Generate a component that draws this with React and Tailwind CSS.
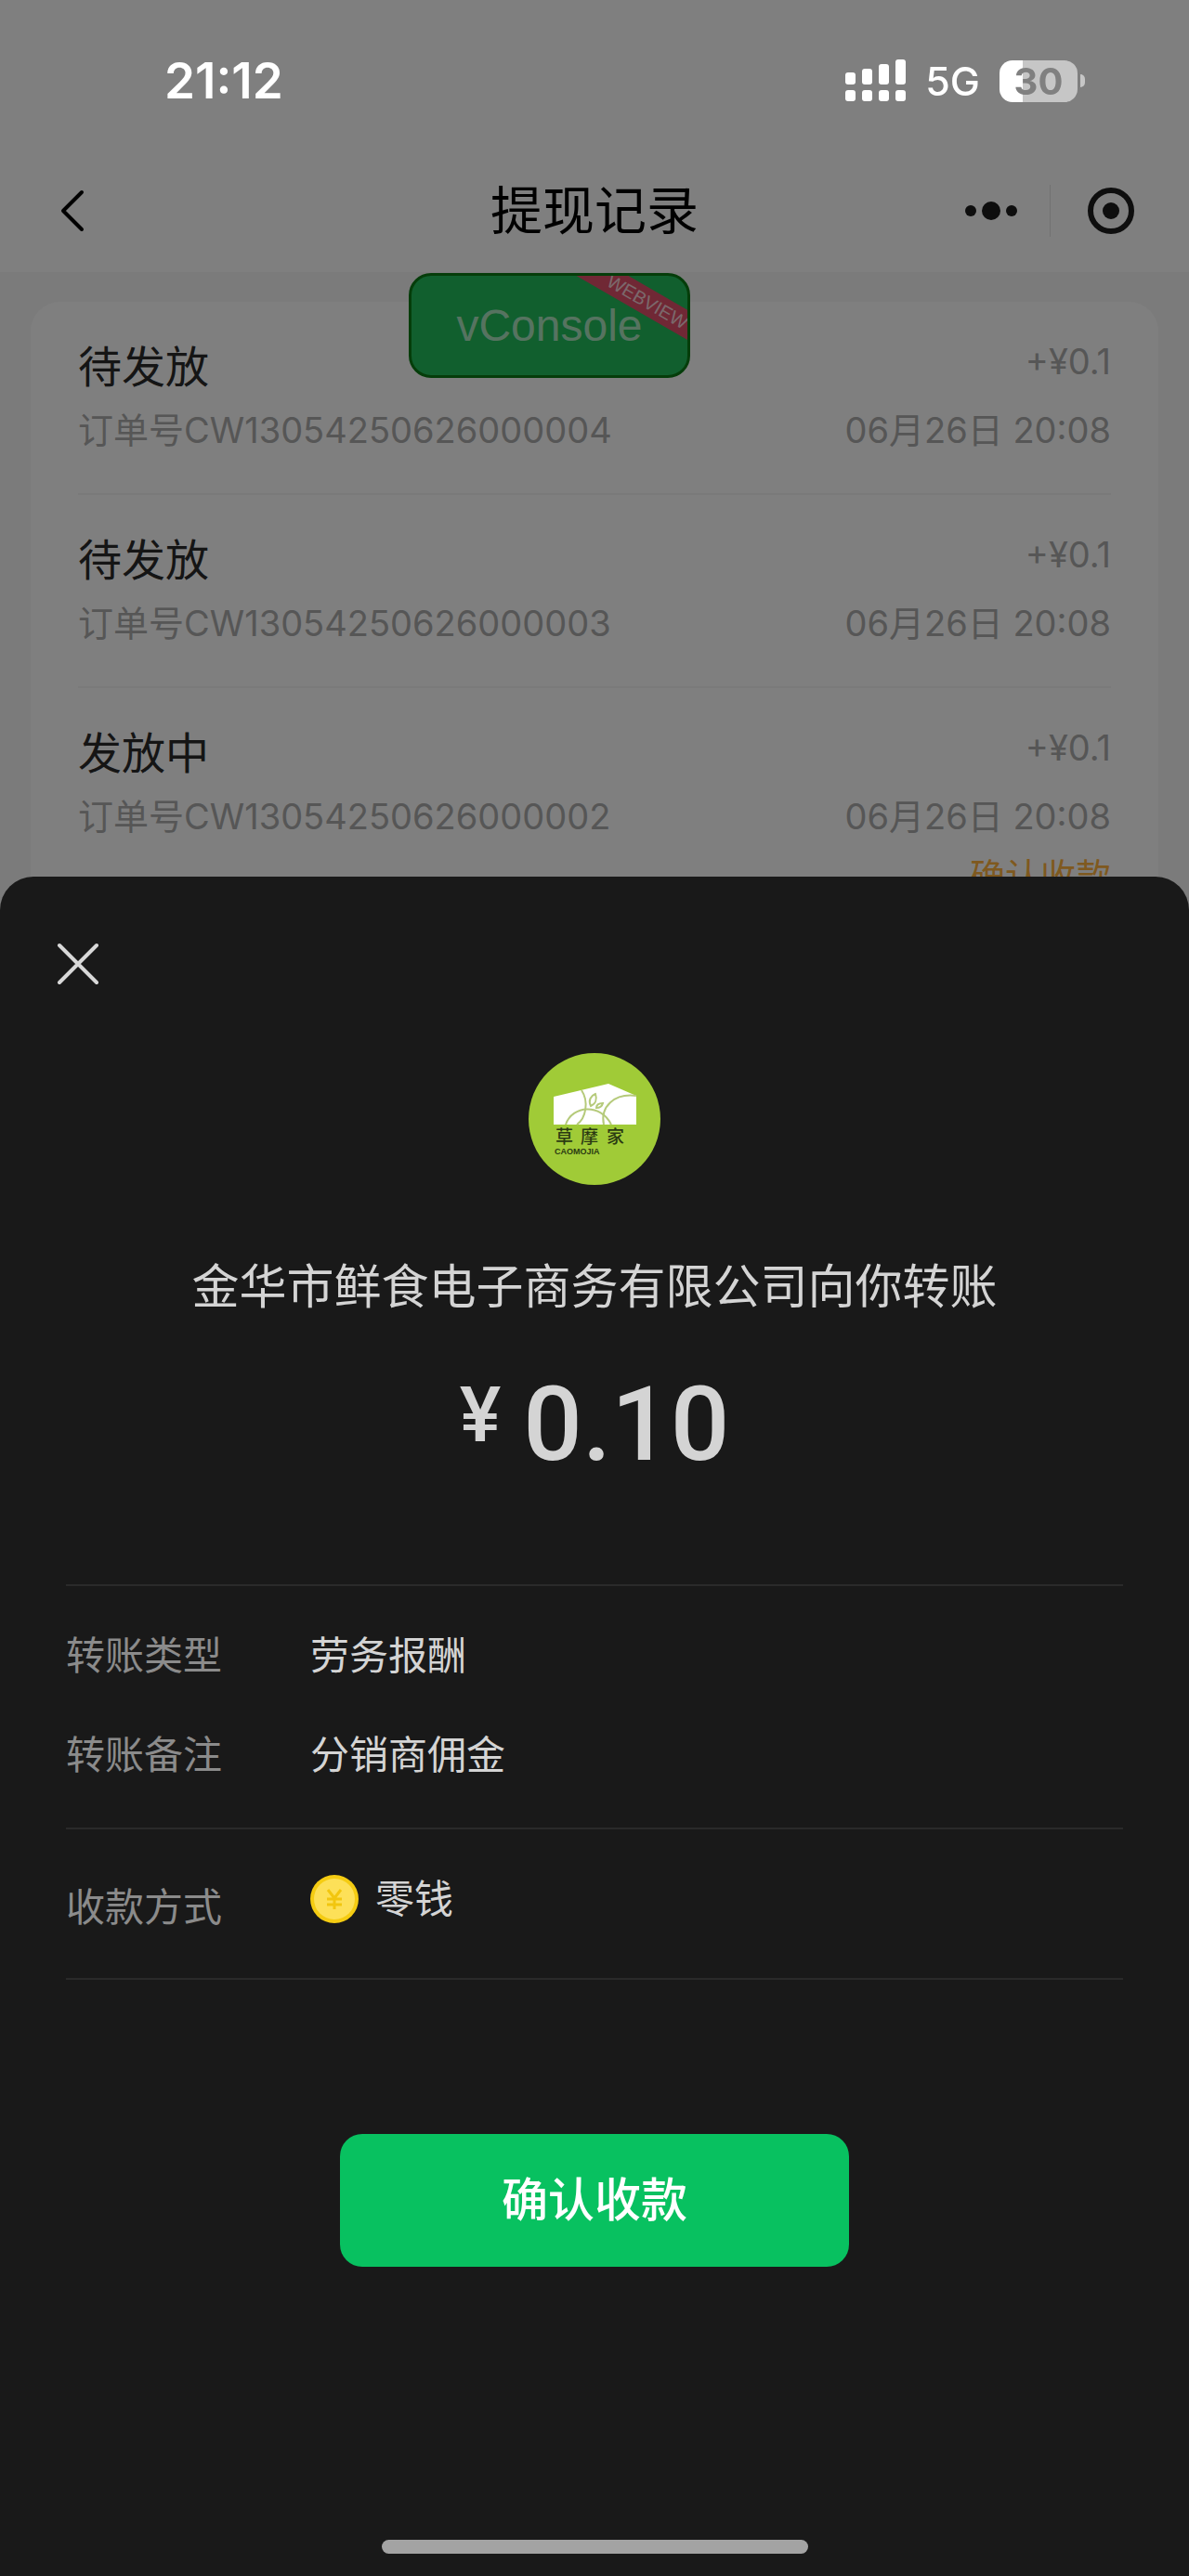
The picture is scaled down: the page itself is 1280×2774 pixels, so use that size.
import React, { useState } from "react";

const records = [
  { id: 1, status: "待发放", orderNo: "CW13054250626000004", amount: "+¥0.1", time: "06月26日 20:08" },
  { id: 2, status: "待发放", orderNo: "CW13054250626000003", amount: "+¥0.1", time: "06月26日 20:08" },
  { id: 3, status: "发放中", orderNo: "CW13054250626000002", amount: "+¥0.1", time: "06月26日 20:08", canConfirm: true },
];

const StatusBar = () => (
  <div className="relative z-20 flex h-[174px] items-center justify-between pl-[177px] pr-[112px] text-white">
    <span className="text-[53px] font-semibold leading-[60px]">21:12</span>

    <div className="flex items-center gap-[21px]">
      <svg width="65" height="46" viewBox="0 0 65 46" fill="currentColor" aria-hidden="true">
        <rect x="0" y="14" width="11" height="13" rx="3" />
        <rect x="18" y="10" width="11" height="17" rx="3" />
        <rect x="36" y="5" width="11" height="22" rx="3" />
        <rect x="54" y="0" width="11" height="27" rx="3" />
        <rect x="0" y="33" width="11" height="12" rx="3" />
        <rect x="18" y="33" width="11" height="12" rx="3" />
        <rect x="36" y="33" width="11" height="12" rx="3" />
        <rect x="54" y="33" width="11" height="12" rx="3" />
      </svg>
      <span className="text-[43px] font-medium leading-[60px]">5G</span>
      <div className="flex items-center gap-[3px]">
        <div className="flex h-[45px] w-[84px] items-center justify-center rounded-[14px] bg-linear-to-r from-white from-30% to-[#c6c6c6] to-30%">
          <span className="text-[40px] font-bold leading-[45px] text-[#808080]">30</span>
        </div>
        <div className="h-[14px] w-[5px] rounded-r-full bg-[#c6c6c6]" />
      </div>
    </div>
  </div>
);

const NavBar = () => (
  <div className="grid h-[106px] grid-cols-3 items-center px-[54px]">
    <button type="button" aria-label="返回" className="flex h-16 w-12 items-center justify-center">
      <svg width="26" height="46" viewBox="0 0 26 46" fill="none" stroke="black" strokeWidth="4" strokeLinecap="round" strokeLinejoin="round">
        <path d="M23 3L3 23L23 43" />
      </svg>
    </button>
    <h1 className="text-center text-[56px] leading-[80px] text-black">提现记录</h1>
    <div className="flex items-center justify-end">
      <button type="button" aria-label="更多" className="flex h-14 items-center pr-[35px]">
        <svg width="56" height="22" viewBox="0 0 56 22" fill="#1c1c1c">
          <circle cx="6" cy="11" r="6" />
          <circle cx="28" cy="11" r="10" />
          <circle cx="50" cy="11" r="6" />
        </svg>
      </button>
      <button type="button" aria-label="关闭小程序" className="flex h-14 items-center border-l border-[#e4e4e4] pl-[39px] pr-1">
        <svg width="52" height="52" viewBox="0 0 52 52">
          <circle cx="26" cy="26" r="22" fill="none" stroke="#1c1c1c" strokeWidth="6" />
          <circle cx="26" cy="26" r="9" fill="#1c1c1c" />
        </svg>
      </button>
    </div>
  </div>
);

const RecordItem = ({ record }) => (
  <li className="border-b-2 border-[#f5f5f5] pb-[38px] pt-9">
    <div className="flex justify-between">
      <span className="text-[47px] leading-[68px] text-[#2a2a2a]">{record.status}</span>
      <span className="text-[38px] leading-[56px] text-[#acacac]">{record.amount}</span>
    </div>
    <div className="mt-1 flex justify-between text-[38px] leading-[60px] text-[#acacac]">
      <span>订单号{record.orderNo}</span>
      <span>{record.time}</span>
    </div>
    {record.canConfirm && (
      <div className="mt-1 flex justify-end">
        <a href="#confirm" className="text-[38px] leading-[60px] text-[#ffb23e]">
          确认收款
        </a>
      </div>
    )}
  </li>
);

const CompanyLogo = () => (
  <svg className="mx-auto mt-16 block" width="142" height="142" viewBox="0 0 142 142" role="img" aria-label="草摩家">
    <circle cx="71" cy="71" r="71" fill="#a0cb37" />
    <path d="M27 47L86 33L116 46V77H27Z" fill="white" />
    <g fill="none" stroke="#b5ca7a" strokeWidth="2">
      <path d="M57 40C65 52 62 70 52 77" />
      <path d="M40 77C47 56 78 54 89 77" />
      <path d="M81 77C77 58 92 43 116 46" />
      <path d="M67 57C64 51 67 46 72 44C74 50 72 55 67 57Z" />
      <path d="M73 59C73 55 76 54 80 54C79 58 77 59 73 59Z" />
    </g>
    <g fill="#2b3a12" fontSize="19" fontWeight="500">
      <text x="29" y="97">草</text>
      <text x="56" y="97">摩</text>
      <text x="84" y="97">家</text>
    </g>
    <text x="28" y="109" fill="#2b3a12" fontSize="9" fontWeight="700" fontFamily="Liberation Sans, sans-serif">
      CAOMOJIA
    </text>
  </svg>
);

const CoinIcon = () => (
  <svg width="52" height="52" viewBox="0 0 52 52" aria-hidden="true">
    <circle cx="26" cy="26" r="26" fill="#f5cc12" />
    <circle cx="26" cy="26" r="22" fill="#fde058" />
    <path d="M19 16L26 25L33 16M26 25V37M18 26H34M18 32H34" fill="none" stroke="#f2c60f" strokeWidth="3" />
  </svg>
);

const TransferSheet = ({ onClose }) => (
  <section role="dialog" aria-label="转账" className="rounded-t-[36px] bg-[#191919] pb-6 pt-[62px] text-[#d4d4d4]">
    <button type="button" aria-label="关闭" onClick={onClose} className="ml-[52px] flex h-16 w-16 items-center justify-center">
      <svg width="46" height="46" viewBox="0 0 46 46" fill="none" stroke="#d8d8d8" strokeWidth="4" strokeLinecap="round">
        <path d="M3 3L43 43M43 3L3 43" />
      </svg>
    </button>

    <CompanyLogo />
    <h2 className="mt-[72px] text-center text-[51px] leading-[76px]">金华市鲜食电子商务有限公司向你转账</h2>
    <p className="mt-[50px] flex items-start justify-center gap-6 font-[Roboto,sans-serif] font-medium">
      <span className="text-[84px] leading-[100px]">¥</span>
      <span className="text-[112px] leading-[120px]">0.10</span>
    </p>

    <dl className="mx-[71px] mt-[112px] text-[42px] leading-[60px]">
      <div className="flex flex-col gap-[47px] border-t-2 border-[#2a2a2a] pb-12 pt-[45px]">
        <div className="flex">
          <dt className="w-[263px] text-[#8b8b8b]">转账类型</dt>
          <dd>劳务报酬</dd>
        </div>
        <div className="flex">
          <dt className="w-[263px] text-[#8b8b8b]">转账备注</dt>
          <dd>分销商佣金</dd>
        </div>
      </div>
      <div className="flex items-start border-y-2 border-[#2a2a2a] pb-[46px] pt-[45px]">
        <dt className="w-[263px] pt-[9px] text-[#8b8b8b]">收款方式</dt>
        <dd className="flex items-center gap-[18px]">
          <CoinIcon />
          零钱
        </dd>
      </div>
    </dl>

    <button
      type="button"
      onClick={onClose}
      className="mx-auto mt-[166px] block w-[548px] rounded-3xl bg-[#08c160] py-9 text-[50px] font-medium leading-[71px] text-white"
    >
      确认收款
    </button>
    <div className="mx-auto mt-[294px] h-[15px] w-[459px] rounded-full bg-[#a3a3a3]" />
  </section>
);

const App = () => {
  const [showSheet, setShowSheet] = useState(true);

  return (
    <div className="min-h-screen bg-[#f7f7f7] font-[Inter,'Noto_Sans_CJK_SC',sans-serif]">
      <header className="relative bg-white pb-[13px]">
        {/* status bar stays above the mask */}
        <StatusBar />
        <NavBar />
        <button
          type="button"
          className="absolute left-[440px] top-[294px] h-[113px] w-[303px] overflow-hidden rounded-3xl border-3 border-[#0a7a14] bg-[#22be5c] font-['Liberation_Sans',sans-serif] text-[48px] leading-[60px] text-[#ffffffa6]"
        >
          vConsole
          <span className="absolute -right-[67px] top-[14px] w-[220px] rotate-30 bg-[#e0506a] text-[20px] leading-[28px] text-[#ffffffc0]">
            WEBVIEW
          </span>
        </button>
      </header>

      <main className="px-[33px] pt-8">
        <ul className="rounded-[32px] bg-white px-[51px]">
          {records.map((record) => (
            <RecordItem key={record.id} record={record} />
          ))}
        </ul>
      </main>

      {showSheet && (
        <div className="fixed inset-0 z-10 flex flex-col justify-end bg-black/50">
          <TransferSheet onClose={() => setShowSheet(false)} />
        </div>
      )}
    </div>
  );
};

export default App;
